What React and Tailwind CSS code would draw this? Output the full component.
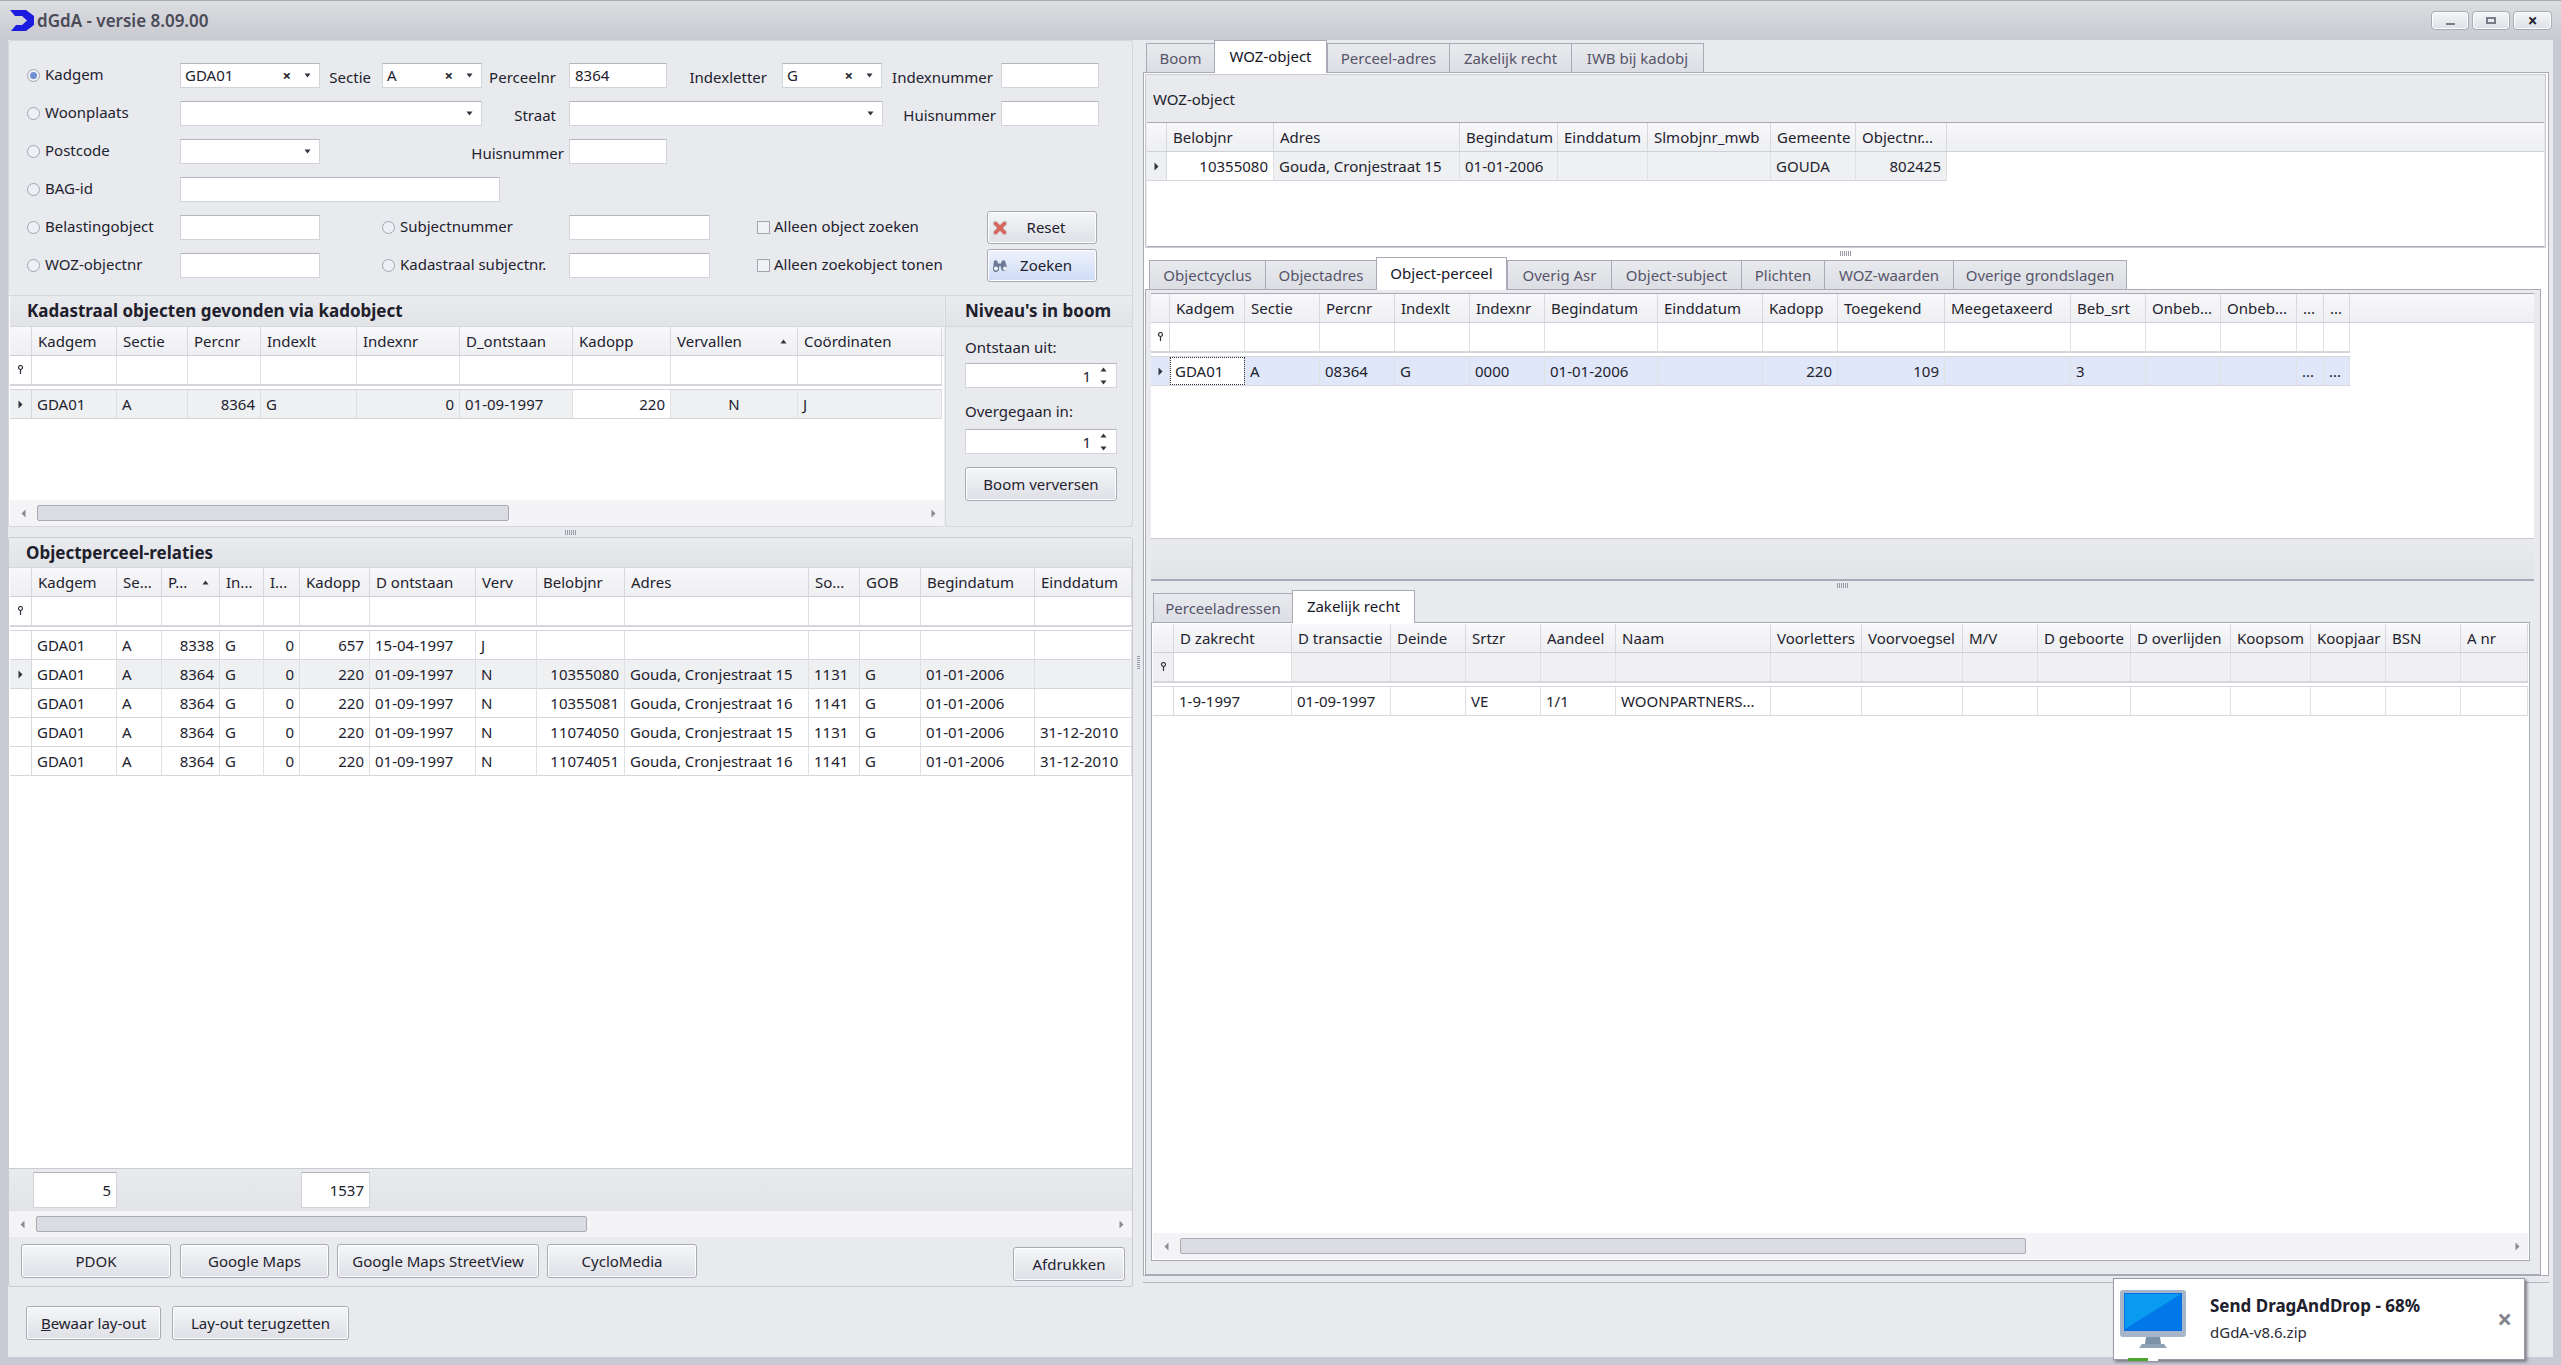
const BTN = 'flex items-center justify-center rounded-[3px] border border-[#a9aab6] bg-gradient-to-b from-[#f5f6f8] to-[#dfe0e6] shadow-[inset_0_0_0_1px_#ffffff] text-[#22222e]';

function Logo() {
  return (
    <svg width="24" height="21" viewBox="0 0 24 21" className="ml-[10px] mr-[3px] shrink-0">
      <path d="M0 0H16L24 6V15L16 21H1L6 15H12L17 10.5L12 6H5Z" fill="#1c1ce0" />
    </svg>
  );
}

function Radio({ on }) {
  return (
    <span className="flex h-[13px] w-[13px] shrink-0 items-center justify-center rounded-full border border-[#a3a4b0] bg-[#eef0f5]">
      {on && <span className="h-[7px] w-[7px] rounded-full bg-[#6f8fd0]" />}
    </span>
  );
}

function RadioLabel({ label, on, className }) {
  return (
    <div className={`flex items-center gap-[5px] ${className}`}>
      <Radio on={on} />
      <span className="-mt-[2px]">{label}</span>
    </div>
  );
}

function Arrow() {
  return (
    <svg width="7" height="5" viewBox="0 0 7 5" className="shrink-0">
      <path d="M0.5 0.5h6L3.5 4.5z" fill="#33333f" />
    </svg>
  );
}

function Input({ value, className, right }) {
  return (
    <div className={`flex h-[25px] shrink-0 items-center border border-[#d3d4da] border-t-[#b4b5c0] bg-white px-[5px] ${right ? 'justify-end' : ''} ${className}`}>
      {value}
    </div>
  );
}

function Combo({ value, clear, className }) {
  return (
    <div className={`flex h-[25px] shrink-0 items-center border border-[#d3d4da] border-t-[#b4b5c0] bg-white pl-[4px] pr-[8px] ${className}`}>
      <span className="flex-1">{value}</span>
      {clear && <span className="mr-[13px] text-[15px] font-bold leading-none">×</span>}
      <Arrow />
    </div>
  );
}

function Lbl({ children, className }) {
  return <div className={`mt-[3px] shrink-0 text-right ${className}`}>{children}</div>;
}

function Row({ children }) {
  return <div className="flex h-[38px] items-center pl-[18px]">{children}</div>;
}

function Check({ label }) {
  return (
    <div className="ml-[47px] flex w-[230px] shrink-0 items-center gap-[4px]">
      <span className="h-[13px] w-[13px] shrink-0 border border-[#a3a4b0] bg-[#f1f2f5]" />
      <span className="-mt-[2px]">{label}</span>
    </div>
  );
}

function SearchForm() {
  return (
    <section className="h-[256px] rounded-t-[3px] border border-[#d6d7dd] bg-[#e9eaee] pt-[15px]">
      <Row>
        <RadioLabel on label="Kadgem" className="w-[153px] shrink-0" />
        <Combo value="GDA01" clear className="w-[140px]" />
        <Lbl className="w-[62px] pr-[11px]">Sectie</Lbl>
        <Combo value="A" clear className="w-[100px]" />
        <Lbl className="w-[87px] pr-[13px]">Perceelnr</Lbl>
        <Input value="8364" className="w-[98px]" />
        <Lbl className="w-[115px] pr-[15px]">Indexletter</Lbl>
        <Combo value="G" clear className="w-[100px]" />
        <Lbl className="w-[119px] pr-[8px]">Indexnummer</Lbl>
        <Input className="w-[98px]" />
      </Row>
      <Row>
        <RadioLabel label="Woonplaats" className="w-[153px] shrink-0" />
        <Combo className="w-[302px]" />
        <Lbl className="w-[87px] pr-[13px]">Straat</Lbl>
        <Combo className="w-[314px]" />
        <Lbl className="w-[118px] pr-[5px]">Huisnummer</Lbl>
        <Input className="w-[98px]" />
      </Row>
      <Row>
        <RadioLabel label="Postcode" className="w-[153px] shrink-0" />
        <Combo className="w-[140px]" />
        <Lbl className="w-[249px] pr-[5px]">Huisnummer</Lbl>
        <Input className="w-[98px]" />
      </Row>
      <Row>
        <RadioLabel label="BAG-id" className="w-[153px] shrink-0" />
        <Input className="w-[320px]" />
      </Row>
      <Row>
        <RadioLabel label="Belastingobject" className="w-[153px] shrink-0" />
        <Input className="w-[140px]" />
        <RadioLabel label="Subjectnummer" className="ml-[62px] w-[187px] shrink-0" />
        <Input className="w-[141px]" />
        <Check label="Alleen object zoeken" />
        <button className={`${BTN} relative h-[33px] w-[110px] shrink-0`}>
          <svg width="14" height="14" viewBox="0 0 14 14" className="absolute left-[5px] top-[9px]">
            <path d="M2.5 2.5l9 9M11.5 2.5l-9 9" stroke="#c9c4c4" strokeWidth="5" strokeLinecap="round" />
            <path d="M2.5 2.5l9 9M11.5 2.5l-9 9" stroke="#d9655c" strokeWidth="3.4" strokeLinecap="round" />
          </svg>
          <span className="pl-[8px]">Reset</span>
        </button>
      </Row>
      <Row>
        <RadioLabel label="WOZ-objectnr" className="w-[153px] shrink-0" />
        <Input className="w-[140px]" />
        <RadioLabel label="Kadastraal subjectnr." className="ml-[62px] w-[187px] shrink-0" />
        <Input className="w-[141px]" />
        <Check label="Alleen zoekobject tonen" />
        <button className="relative flex h-[33px] w-[110px] shrink-0 items-center justify-center rounded-[3px] border border-[#a9aab6] bg-gradient-to-b from-[#eef2fb] to-[#cfdcf6] shadow-[inset_0_0_0_1px_#ffffff] text-[#22222e]">
          <svg width="17" height="12" viewBox="0 0 17 12" className="absolute left-[4px] top-[10px]">
            <path d="M3 1h3l1 3h3l1-3h3l2 7a3 3 0 1 1-6 1V7H8v2a3 3 0 1 1-6 1z" fill="#6a7a96" transform="translate(-1 -0.5)" />
            <circle cx="4" cy="8.6" r="2" fill="#f0f4fb" />
            <circle cx="13" cy="8.6" r="2" fill="#f0f4fb" />
          </svg>
          <span className="pl-[8px]">Zoeken</span>
        </button>
      </Row>
    </section>
  );
}

function FilterPin() {
  return (
    <svg width="7" height="10" viewBox="0 0 7 10">
      <circle cx="3.5" cy="2.5" r="2" fill="none" stroke="#33333f" strokeWidth="1.2" />
      <path d="M3.5 4v5" stroke="#33333f" strokeWidth="1.2" />
    </svg>
  );
}

function RowMark() {
  return (
    <svg width="5" height="9" viewBox="0 0 5 9">
      <path d="M0.5 0.5l4 4-4 4z" fill="#33333f" />
    </svg>
  );
}

function SortUp() {
  return (
    <svg width="7" height="5" viewBox="0 0 7 5" className="absolute right-[10px] top-[12px]">
      <path d="M0.5 4.5h6L3.5 0.5z" fill="#33333f" />
    </svg>
  );
}

function Grid({ indW, cols, rows, filterBg = 'bg-white', filterFirst }) {
  const total = cols.reduce((sum, c) => sum + c.w, indW);
  return (
    <div className="min-w-0">
      <div className="flex h-[29px] border-b border-[#cfd0d6] bg-gradient-to-b from-[#f8f8fa] to-[#eeeff2]">
        <div className="shrink-0 border-r border-[#d8d9de]" style={{ width: indW }} />
        {cols.map((c) => (
          <div key={c.t + c.w} className="relative shrink-0 overflow-hidden whitespace-nowrap border-r border-[#d8d9de] pl-[6px] pt-[4px]" style={{ width: c.w }}>
            {c.t}
            {c.sort && <SortUp />}
          </div>
        ))}
      </div>
      {filterFirst !== undefined && (
        <>
          <div className={`flex h-[28px] ${filterBg}`}>
            <div className="flex shrink-0 items-center justify-center border-r border-[#d8d9de]" style={{ width: indW }}><FilterPin /></div>
            {cols.map((c, i) => (
              <div key={c.t + c.w} className={`shrink-0 border-r border-[#e0e1e5] ${i === 0 && filterFirst ? 'bg-white' : ''}`} style={{ width: c.w }} />
            ))}
          </div>
          <div className="h-[6px] border-b border-t-2 border-[#d5d6dc] bg-white" style={{ width: total }} />
        </>
      )}
      {rows.map((r, n) => (
        <div key={n} className={`flex h-[29px] border-b border-[#d6d7dc] ${r.bg || 'bg-white'}`} style={{ width: total }}>
          <div className="flex shrink-0 items-center justify-center border-r border-[#d8d9de]" style={{ width: indW }}>{r.mark && <RowMark />}</div>
          {cols.map((c, i) => (
            <div
              key={c.t + c.w}
              className={`flex shrink-0 items-center overflow-hidden whitespace-nowrap border-r border-[#dfe0e4] px-[5px] ${c.right ? 'justify-end' : ''} ${c.center ? 'justify-center' : ''} ${r.white === i ? 'bg-white' : ''} ${r.focus === i ? 'bg-white outline-1 -outline-offset-1 outline-dotted outline-[#33333f]' : ''}`}
              style={{ width: c.w }}
            >
              {r.cells[i]}
            </div>
          ))}
        </div>
      ))}
    </div>
  );
}

function ScrollBar({ thumb }) {
  return (
    <div className="flex h-[26px] items-center bg-[#f4f4f7] pl-[11px] pr-[8px]">
      <svg width="5" height="9" viewBox="0 0 5 9" className="shrink-0">
        <path d="M4.5 0.5l-4 4 4 4z" fill="#8a8a96" />
      </svg>
      <div className={`ml-[11px] h-[16px] rounded-[2px] border border-[#a9aab6] bg-[#dbdce1] ${thumb}`} />
      <div className="flex-1" />
      <svg width="5" height="9" viewBox="0 0 5 9" className="shrink-0">
        <path d="M0.5 0.5l4 4-4 4z" fill="#8a8a96" />
      </svg>
    </div>
  );
}

function PanelHead({ h = 'h-[31px]', children }) {
  return (
    <div className={`flex ${h} shrink-0 items-center border-b border-[#d6d7dd] bg-gradient-to-b from-[#eaebef] to-[#e2e3e7] pl-[17px] text-[17px] font-bold text-[#20202c]`}>
      {children}
    </div>
  );
}

const foundCols = [
  { t: 'Kadgem', w: 85 }, { t: 'Sectie', w: 71 }, { t: 'Percnr', w: 73, right: true }, { t: 'Indexlt', w: 96 },
  { t: 'Indexnr', w: 103, right: true }, { t: 'D_ontstaan', w: 113 }, { t: 'Kadopp', w: 98, right: true },
  { t: 'Vervallen', w: 127, center: true, sort: true }, { t: 'Coördinaten', w: 144 },
];

const foundRows = [
  { mark: true, bg: 'bg-[#eff0f2]', white: 6, cells: ['GDA01', 'A', '8364', 'G', '0', '01-09-1997', '220', 'N', 'J'] },
];

const relCols = [
  { t: 'Kadgem', w: 85 }, { t: 'Se...', w: 45 }, { t: 'P...', w: 58, right: true, sort: true }, { t: 'In...', w: 44 },
  { t: 'I...', w: 36, right: true }, { t: 'Kadopp', w: 70, right: true }, { t: 'D ontstaan', w: 106 }, { t: 'Verv', w: 61 },
  { t: 'Belobjnr', w: 88, right: true }, { t: 'Adres', w: 184 }, { t: 'So...', w: 51 }, { t: 'GOB', w: 61 },
  { t: 'Begindatum', w: 114 }, { t: 'Einddatum', w: 97 },
];

const relRows = [
  { cells: ['GDA01', 'A', '8338', 'G', '0', '657', '15-04-1997', 'J', '', '', '', '', '', ''] },
  { mark: true, bg: 'bg-[#eff0f2]', white: 0, cells: ['GDA01', 'A', '8364', 'G', '0', '220', '01-09-1997', 'N', '10355080', 'Gouda, Cronjestraat 15', '1131', 'G', '01-01-2006', ''] },
  { cells: ['GDA01', 'A', '8364', 'G', '0', '220', '01-09-1997', 'N', '10355081', 'Gouda, Cronjestraat 16', '1141', 'G', '01-01-2006', ''] },
  { cells: ['GDA01', 'A', '8364', 'G', '0', '220', '01-09-1997', 'N', '11074050', 'Gouda, Cronjestraat 15', '1131', 'G', '01-01-2006', '31-12-2010'] },
  { cells: ['GDA01', 'A', '8364', 'G', '0', '220', '01-09-1997', 'N', '11074051', 'Gouda, Cronjestraat 16', '1141', 'G', '01-01-2006', '31-12-2010'] },
];

function Spin({ className }) {
  return (
    <div className={`flex h-[25px] items-center justify-end border border-[#d3d4da] border-t-[#b4b5c0] bg-white pr-[9px] ${className}`}>
      <span className="mr-[9px]">1</span>
      <span className="flex flex-col gap-[8px]">
        <svg width="7" height="5" viewBox="0 0 7 5"><path d="M0.5 4.5h6L3.5 0.5z" fill="#33333f" /></svg>
        <svg width="7" height="5" viewBox="0 0 7 5"><path d="M0.5 0.5h6L3.5 4.5z" fill="#33333f" /></svg>
      </span>
    </div>
  );
}

function FoundPanel() {
  return (
    <section className="flex h-[231px] gap-[1px]">
      <div className="flex w-[936px] shrink-0 flex-col overflow-hidden rounded-b-[3px] border-b border-l border-[#d6d7dd] bg-white pl-[1px]">
        <PanelHead>Kadastraal objecten gevonden via kadobject</PanelHead>
        <div className="flex-1 overflow-hidden">
          <Grid indW={22} cols={foundCols} rows={foundRows} filterFirst={false} />
        </div>
        <ScrollBar thumb="w-[472px]" />
      </div>
      <div className="flex flex-1 flex-col rounded-b-[3px] border border-t-0 border-[#d6d7dd] bg-[#e9eaee]">
        <div className="flex h-[31px] shrink-0 items-center border-b border-[#d6d7dd] bg-gradient-to-b from-[#eaebef] to-[#e2e3e7] pl-[19px] text-[17px] font-bold text-[#20202c]">
          Niveau's in boom
        </div>
        <div className="flex flex-col pl-[19px] pr-[15px]">
          <div className="mt-[10px] h-[26px]">Ontstaan uit:</div>
          <Spin />
          <div className="mt-[13px] h-[28px]">Overgegaan in:</div>
          <Spin />
          <button className={`${BTN} mt-[13px] h-[34px]`}>Boom verversen</button>
        </div>
      </div>
    </section>
  );
}

function Grip({ className }) {
  return <div className={`h-[5px] w-[12px] bg-[repeating-linear-gradient(90deg,#9a9aa6_0_1px,transparent_1px_2px)] ${className}`} />;
}

function RelationPanel() {
  return (
    <section className="flex h-[750px] flex-col overflow-hidden rounded-[3px] border border-[#c9cad2] bg-[#e9eaee]">
      <PanelHead h="h-[30px]">Objectperceel-relaties</PanelHead>
      <div className="flex-1 overflow-hidden bg-white pl-[1px]">
        <Grid indW={22} cols={relCols} rows={relRows} filterFirst={false} />
      </div>
      <div className="flex h-[43px] shrink-0 items-center gap-[184px] border-t border-[#c9cad2] bg-gradient-to-b from-[#e9eaee] to-[#e3e4e8] pl-[24px]">
        <Input right value="5" className="!h-[36px] w-[84px]" />
        <Input right value="1537" className="!h-[36px] w-[69px]" />
      </div>
      <ScrollBar thumb="w-[551px]" />
      <div className="flex h-[49px] shrink-0 items-start pl-[12px] pr-[7px] pt-[7px]">
        <button className={`${BTN} h-[34px] w-[150px]`}>PDOK</button>
        <button className={`${BTN} ml-[9px] h-[34px] w-[149px]`}>Google Maps</button>
        <button className={`${BTN} ml-[8px] h-[34px] w-[202px]`}>Google Maps StreetView</button>
        <button className={`${BTN} ml-[8px] h-[34px] w-[150px]`}>CycloMedia</button>
        <button className={`${BTN} ml-auto mt-[3px] h-[34px] w-[112px]`}>Afdrukken</button>
      </div>
    </section>
  );
}

function LeftPane() {
  return (
    <div className="flex w-[1125px] shrink-0 flex-col">
      <SearchForm />
      <FoundPanel />
      <div className="flex h-[10px] items-center justify-center"><Grip /></div>
      <RelationPanel />
      <div className="flex gap-[11px] pl-[18px] pt-[19px]">
        <button className={`${BTN} h-[34px] w-[135px]`}><span><span className="underline">B</span>ewaar lay-out</span></button>
        <button className={`${BTN} h-[34px] w-[177px]`}><span>Lay-out te<span className="underline">r</span>ugzetten</span></button>
      </div>
    </div>
  );
}

function Tabs({ items, active, className }) {
  return (
    <div className={`flex items-end ${className}`}>
      {items.map(([t, w]) =>
        t === active ? (
          <div key={t} className="relative z-10 -mb-px flex h-[33px] items-center justify-center border border-b-0 border-[#a9aab6] bg-white pb-[3px] text-[#15151f]" style={{ width: w }}>{t}</div>
        ) : (
          <div key={t} className="flex h-[29px] items-center justify-center border border-b-0 border-r-0 border-[#a9aab6] bg-gradient-to-b from-[#e9eaee] to-[#dddee3] text-[#55556a] last:border-r" style={{ width: w }}>{t}</div>
        ),
      )}
    </div>
  );
}

const wozCols = [
  { t: 'Belobjnr', w: 107, right: true }, { t: 'Adres', w: 186 }, { t: 'Begindatum', w: 98 }, { t: 'Einddatum', w: 90 },
  { t: 'Slmobjnr_mwb', w: 123 }, { t: 'Gemeente', w: 85 }, { t: 'Objectnr...', w: 91, right: true },
];
const wozRows = [
  { mark: true, bg: 'bg-[#eff0f2]', white: 0, cells: ['10355080', 'Gouda, Cronjestraat 15', '01-01-2006', '', '', 'GOUDA', '802425'] },
];

const perceelCols = [
  { t: 'Kadgem', w: 75 }, { t: 'Sectie', w: 75 }, { t: 'Percnr', w: 75 }, { t: 'Indexlt', w: 75 }, { t: 'Indexnr', w: 75 },
  { t: 'Begindatum', w: 113 }, { t: 'Einddatum', w: 105 }, { t: 'Kadopp', w: 75, right: true }, { t: 'Toegekend', w: 107, right: true },
  { t: 'Meegetaxeerd', w: 126 }, { t: 'Beb_srt', w: 75 }, { t: 'Onbeb...', w: 75 }, { t: 'Onbeb...', w: 76 }, { t: '...', w: 27 }, { t: '...', w: 26 },
];
const perceelRows = [
  { mark: true, bg: 'bg-[#dfe7f9]', focus: 0, cells: ['GDA01', 'A', '08364', 'G', '0000', '01-01-2006', '', '220', '109', '', '3', '', '', '...', '...'] },
];

const rechtCols = [
  { t: 'D zakrecht', w: 118 }, { t: 'D transactie', w: 99 }, { t: 'Deinde', w: 75 }, { t: 'Srtzr', w: 75 }, { t: 'Aandeel', w: 75 },
  { t: 'Naam', w: 155 }, { t: 'Voorletters', w: 91 }, { t: 'Voorvoegsel', w: 101 }, { t: 'M/V', w: 75 }, { t: 'D geboorte', w: 93 },
  { t: 'D overlijden', w: 100 }, { t: 'Koopsom', w: 80 }, { t: 'Koopjaar', w: 75 }, { t: 'BSN', w: 75 }, { t: 'A nr', w: 67 },
];
const rechtRows = [
  { cells: ['1-9-1997', '01-09-1997', '', 'VE', '1/1', 'WOONPARTNERS...', '', '', '', '', '', '', '', '', ''] },
];

function RightPane() {
  return (
    <div className="flex h-[1243px] w-[1406px] shrink-0 flex-col border-b border-[#b4b5c0]">
      <Tabs
        className="h-[32px] shrink-0 pl-[3px]"
        active="WOZ-object"
        items={[['Boom', 68], ['WOZ-object', 113], ['Perceel-adres', 122], ['Zakelijk recht', 122], ['IWB bij kadobj', 133]]}
      />
      <div className="flex h-[1204px] shrink-0 flex-col border border-[#a9aab6] bg-white pl-[1px] pr-[2px] pt-[1px]">
        <div className="flex h-[174px] shrink-0 flex-col border border-[#c9cad2] bg-[#e9eaee] pl-[1px] pr-[1px]">
          <div className="flex h-[47px] shrink-0 items-center pl-[6px]">WOZ-object</div>
          <div className="flex-1 border-y border-[#a9aab6] bg-white">
            <Grid indW={20} cols={wozCols} rows={wozRows} />
          </div>
        </div>
        <div className="flex h-[10px] shrink-0 items-center justify-center"><Grip /></div>
        <Tabs
          className="h-[31px] shrink-0 pl-[4px]"
          active="Object-perceel"
          items={[['Objectcyclus', 116], ['Objectadres', 111], ['Object-perceel', 131], ['Overig Asr', 104], ['Object-subject', 130], ['Plichten', 83], ['WOZ-waarden', 129], ['Overige grondslagen', 174]]}
        />
        <div className="flex w-[1396px] flex-1 flex-col border border-[#a9aab6] bg-[#e9eaee] pl-[5px] pr-[6px] pt-[3px]">
          <div className="flex h-[288px] shrink-0 flex-col border-b-2 border-t border-[#a9aab6] bg-white">
            <div className="flex-1 overflow-hidden">
              <Grid indW={19} cols={perceelCols} rows={perceelRows} filterFirst={false} />
            </div>
            <div className="h-[41px] border-t border-[#c9cad2] bg-gradient-to-b from-[#e9eaee] to-[#e3e4e8]" />
          </div>
          <div className="flex h-[9px] shrink-0 items-center justify-center"><Grip /></div>
          <Tabs
            className="h-[32px] shrink-0 pl-[2px]"
            active="Zakelijk recht"
            items={[['Perceeladressen', 139], ['Zakelijk recht', 123]]}
          />
          <div className="flex h-[639px] w-[1379px] shrink-0 flex-col border border-[#a9aab6] bg-white p-[1px]">
            <div className="flex-1 overflow-hidden">
              <Grid indW={21} cols={rechtCols} rows={rechtRows} filterBg="bg-[#f0f0f2]" filterFirst />
            </div>
            <ScrollBar thumb="w-[846px]" />
          </div>
        </div>
      </div>
    </div>
  );
}

function Popup() {
  return (
    <div className="absolute left-[2113px] top-[1278px] z-20 flex h-[82px] w-[412px] items-center border border-[#9a9aa6] bg-white shadow-[2px_2px_3px_#7a7a86]">
      <svg width="66" height="59" viewBox="0 0 66 59" className="ml-[6px] shrink-0">
        <rect x="0" y="0" width="66" height="47" rx="3" fill="#a6b6c8" />
        <rect x="4" y="3" width="58" height="38" fill="#0a6fe0" />
        <path d="M5 4h56v36H5z" fill="#0078ea" />
        <path d="M5 4h56L5 39z" fill="#0a9af2" />
        <path d="M26 47h14l1 7H25z" fill="#7c92a8" />
        <path d="M22 54h22l3 4H19z" fill="#8fa3b7" />
      </svg>
      <div className="ml-[24px] flex flex-col gap-[6px]">
        <div className="text-[17px] font-bold text-[#20202c]">Send DragAndDrop - 68%</div>
        <div className="text-[#2a2a36]">dGdA-v8.6.zip</div>
      </div>
      <div className="ml-auto mr-[12px] text-[26px] font-bold leading-none text-[#84848e]">×</div>
      <div className="absolute bottom-[-2px] left-[14px] flex h-[3px] w-[30px] bg-white">
        <div className="w-[20px] bg-[#4fa52f]" />
      </div>
    </div>
  );
}

export default function App() {
  return (
    <div className="relative flex h-screen w-screen flex-col overflow-hidden bg-[#e9eaee] text-[15px] leading-[20px] text-[#22222e] [font-family:'Noto_Sans',sans-serif]">
      <header className="flex h-[40px] shrink-0 items-center border-t border-[#a9aab6] bg-gradient-to-b from-[#dcdde1] to-[#c9cad0] pr-[9px]">
        <Logo />
        <span className="text-[17px] font-semibold text-[#4b4b58]">dGdA - versie 8.09.00</span>
        <div className="ml-auto flex gap-[3px]">
          <button className={`${BTN} h-[19px] w-[38px] rounded-[4px] pt-[6px]`}><span className="h-[2px] w-[9px] bg-[#7a7a88]" /></button>
          <button className={`${BTN} h-[19px] w-[38px] rounded-[4px]`}><span className="h-[7px] w-[10px] border-2 border-[#7a7a88]" /></button>
          <button className={`${BTN} h-[19px] w-[39px] rounded-[4px] text-[17px] font-bold text-[#7a7a88]`}>×</button>
        </div>
      </header>
      <main className="flex flex-1 border-b-[8px] border-l-[8px] border-r-[8px] border-[#c8c9d3]">
        <LeftPane />
        <div className="flex w-[10px] shrink-0 flex-col items-center pt-[615px]">
          <div className="h-[14px] w-[3px] bg-[repeating-linear-gradient(0deg,#9a9aa6_0_1px,transparent_1px_2px)]" />
        </div>
        <RightPane />
      </main>
      <Popup />
    </div>
  );
}
